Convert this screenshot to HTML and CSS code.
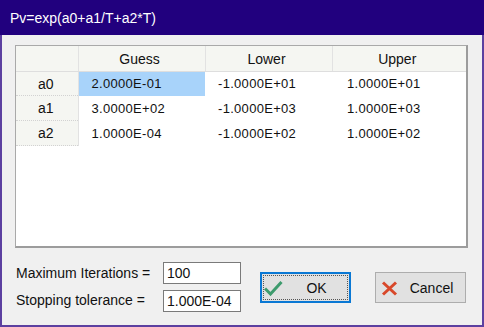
FILE: index.html
```html
<!DOCTYPE html>
<html lang="en">
<head>
<meta charset="utf-8">
<title>Pv=exp(a0+a1/T+a2*T)</title>
<link rel="stylesheet" href="styles.css">
</head>
<body>
<div class="window">
  <div class="titlebar">Pv=exp(a0+a1/T+a2*T)</div>
  <div class="client">
    <div class="grid">
      <table>
        <colgroup>
          <col class="c-head"><col class="c-data"><col class="c-data"><col>
        </colgroup>
        <tr class="head">
          <th class="corner"></th><th>Guess</th><th>Lower</th><th>Upper</th>
        </tr>
        <tr class="first">
          <th class="rowhead">a0</th><td class="selected">2.0000E-01</td><td>-1.0000E+01</td><td class="last">1.0000E+01</td>
        </tr>
        <tr>
          <th class="rowhead">a1</th><td>3.0000E+02</td><td>-1.0000E+03</td><td class="last">1.0000E+03</td>
        </tr>
        <tr>
          <th class="rowhead">a2</th><td>1.0000E-04</td><td>-1.0000E+02</td><td class="last">1.0000E+02</td>
        </tr>
      </table>
    </div>
    <div class="bottom">
      <div class="settings">
        <label for="maxit">Maximum Iterations =</label>
        <input id="maxit" type="text" value="100">
        <label for="tol">Stopping tolerance =</label>
        <input id="tol" type="text" value="1.000E-04">
      </div>
      <button class="btn default">
        <svg class="icon" width="20" height="16" viewBox="0 0 20 16"><path d="M1 8.5 L6.5 14 L17.5 2" fill="none" stroke="#3d9b6d" stroke-width="3"/></svg>
        <span>OK</span>
      </button>
      <button class="btn">
        <svg class="icon" width="20" height="16" viewBox="0 0 20 16"><path d="M5 2.5 L18 14.5 M18 2.5 L5 14.5" fill="none" stroke="#d8482a" stroke-width="3"/></svg>
        <span>Cancel</span>
      </button>
    </div>
  </div>
</div>
</body>
</html>
```

FILE: styles.css
```css
body {
    margin: 0;
    font-family: "Liberation Sans", Arial, sans-serif;
    font-size: 14px;
    color: #111;
}
.window {
    width: 484px;
    height: 327px;
    display: flex;
    flex-direction: column;
}
.titlebar {
    height: 35px;
    line-height: 36px;
    padding-left: 10px;
    background: #21007e;
    color: #fff;
    font-size: 14px;
}
.client {
    flex: 1;
    background: #f0f0f0;
    border: 2px solid #5c40a0;
    border-top: none;
    padding: 10px 14px 0 13px;
}

/* parameter grid */
.grid {
    height: 203px;
    box-sizing: border-box;
    background: #fff;
    border: 1px solid #a9a9a9;
    border-right: 2px solid #9c9c9c;
    border-bottom: 2px solid #9c9c9c;
}
.grid table {
    width: 100%;
    border-collapse: collapse;
    table-layout: fixed;
    font-size: 13px;
}
.c-head {width: 62px;}
.c-data {width: 127px;}
.grid th {
    background: #f5f6f2;
    font-weight: normal;
}
.grid tr.head th {
    height: 25px;
    padding: 0 4px 0 0;
    font-size: 14px;
    border-left: 1px solid #e2e2e2;
    border-bottom: 1px solid #dedede;
}
.grid tr.head th.corner {border-left: none;}
.grid th.rowhead {
    height: 24px;
    font-size: 14px;
    padding: 0 2px 0 0;
    border-bottom: 1px dotted #d2d2d2;
    border-right: 1px solid #e2e2e2;
}
.grid tr.first th.rowhead {height: 23px;}
.grid td {
    padding: 0 0 0 13px;
    white-space: nowrap;
    letter-spacing: 0.3px;
}
.grid td.last {padding-left: 15px;}
.grid td.selected {background: #a8d3fa;}

/* bottom controls */
.bottom {
    display: flex;
    align-items: center;
    margin-top: 14px;
}
.settings {
    display: grid;
    grid-template-columns: 148px 78px;
    grid-auto-rows: 22px;
    row-gap: 5px;
    align-items: center;
}
.settings label {padding-left: 1px;}
.settings input {
    box-sizing: border-box;
    width: 78px;
    height: 22px;
    margin: 0;
    padding: 0 3px;
    border: 1px solid #7a7a7a;
    background: #fff;
    font-family: inherit;
    font-size: 14px;
    color: #111;
}
.settings input:last-child {margin-top: 1px;}

.btn {
    box-sizing: border-box;
    width: 91px;
    height: 31px;
    margin: 2px 0 0 24px;
    padding: 0 0 0 2px;
    display: flex;
    align-items: center;
    background: #e1e1e1;
    border: 1px solid #adadad;
    font-family: inherit;
    font-size: 14px;
    color: #111;
}
.btn .icon {flex: none;}
.btn span {flex: 1; text-align: center;}
.btn.default {
    margin-left: 19px;
    border: 2px solid #0a78d4;
    outline: 1px dotted #555;
    outline-offset: -4px;
}
```
